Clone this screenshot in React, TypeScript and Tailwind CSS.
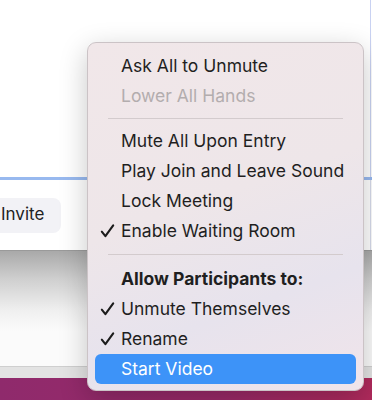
import React from "react";

const Check = () => (
  <svg width="15" height="15" viewBox="0 0 15 15" className="absolute left-[5px] top-1/2 -translate-y-1/2">
    <path d="M1.8 8.2 L5.4 12.6 L13.2 1.8" fill="none" stroke="#1c1c1c" strokeWidth="2.1" strokeLinecap="round" strokeLinejoin="round" />
  </svg>
);

type Item = { label: string; checked?: boolean; disabled?: boolean; bold?: boolean; active?: boolean };

const Row = ({ label, checked, disabled, bold, active }: Item) => (
  <div
    className={
      "relative h-[30px] mx-[7px] rounded-[6px] flex items-center pl-[26px] text-[17.5px] leading-none " +
      (active ? "bg-[#3d93f8] text-white " : "") +
      (disabled ? "text-[#b3adae] " : active ? "" : "text-[#1f1f1f] ") +
      (bold ? "font-bold" : "")
    }
  >
    {checked && <Check />}
    <span>{label}</span>
  </div>
);

const Sep = ({ h, top }: { h: string; top: string }) => (
  <div className={h + " relative"}>
    <div className={"absolute left-[20px] right-[20px] h-px bg-[#d3cbcd] " + top} />
  </div>
);

export default function App() {
  return (
    <div
      className="relative w-[372px] h-[400px] overflow-hidden bg-white"
      style={{ fontFamily: "Inter, 'Liberation Sans', sans-serif" }}
    >
      {/* background windows */}
      <div className="flex flex-col w-full h-full">
        <div className="w-[371px] h-[177px] bg-white border-r border-[#c9d2f2]" />
        <div className="w-full h-[3px] bg-[#98b9ef]" />
        <div className="w-[371px] h-[70px] bg-white border-r border-[#d8dcec] flex items-center">
          <div className="ml-[-20px] w-[81px] h-[35px] rounded-[8px] bg-[#f2f2f6] flex items-center pl-[21px] text-[17px] text-[#222222]">
            Invite
          </div>
        </div>
        <div className="w-full h-px bg-[#9a9a9a]" />
        <div className="w-full h-[80px] bg-[linear-gradient(180deg,#a9a9a9_0%,#cfcfcf_35%,#f0f0f0_75%,#fbfbfb_100%)]" />
        <div className="w-full h-[35px] bg-[#fbfbfb]" />
        <div className="w-full h-px bg-[#cfcfcf]" />
        <div className="w-full h-[11px] bg-[#e3e3e3]" />
        <div className="w-full flex-1 bg-[linear-gradient(90deg,#8f2a6c_0%,#9a2a68_60%,#b02a5c_100%)]" />
      </div>

      {/* menu */}
      <div className="absolute left-[87px] top-[42px] w-[277px] h-[349px] rounded-[9px] border border-[#cbc3c6] shadow-[0_8px_28px_rgba(0,0,0,0.22)] bg-[linear-gradient(160deg,#f1e7e9_0%,#eee6e9_45%,#e7e3ed_72%,#f0e4ea_100%)] pt-[8px] flex flex-col">
        <Row label="Ask All to Unmute" />
        <Row label="Lower All Hands" disabled />
        <Sep h="h-[15px]" top="top-[7px]" />
        <Row label="Mute All Upon Entry" />
        <Row label="Play Join and Leave Sound" />
        <Row label="Lock Meeting" />
        <Row label="Enable Waiting Room" checked />
        <Sep h="h-[18px]" top="top-[8px]" />
        <Row label="Allow Participants to:" bold />
        <Row label="Unmute Themselves" checked />
        <Row label="Rename" checked />
        <Row label="Start Video" active />
      </div>
    </div>
  );
}
